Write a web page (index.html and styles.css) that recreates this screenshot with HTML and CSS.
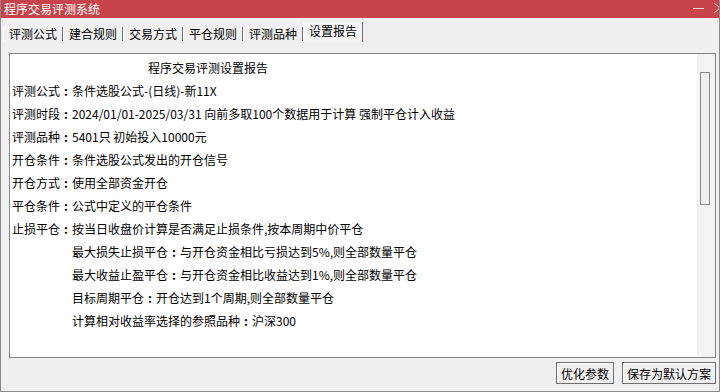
FILE: index.html
```html
<!DOCTYPE html>
<html lang="zh-CN">
<head>
  <meta charset="UTF-8" />
  <title>程序交易评测系统</title>
  <link rel="stylesheet" href="styles.css">
</head>
<body>
  <div class="window">
    <div class="titlebar">
      <span class="title">程序交易评测系统</span>
      <span class="win-btns">
        <svg class="ico-min" width="12" height="12" viewBox="0 0 12 12"><path d="M0 6.5h11" stroke="#f3d0d2" stroke-width="1"/></svg>
        <svg class="ico-close" width="6" height="12" viewBox="0 0 6 12"><path d="M0 2l6 5M0 12l6-5" stroke="#f3d0d2" stroke-width="1" fill="none"/></svg>
      </span>
    </div>

    <div class="tabs">
      <div class="tab">评测公式</div>
      <div class="tab">建合规则</div>
      <div class="tab">交易方式</div>
      <div class="tab">平仓规则</div>
      <div class="tab">评测品种</div>
      <div class="tab active">设置报告</div>
    </div>

    <div class="report">
      <div class="report-text">
        <div class="line heading">程序交易评测设置报告</div>
        <div class="line">评测公式<span class="colon">:</span>条件选股公式-(日线)-新11X</div>
        <div class="line">评测时段<span class="colon">:</span>2024/01/01-2025/03/31 向前多取100个数据用于计算 强制平仓计入收益</div>
        <div class="line">评测品种<span class="colon">:</span>5401只 初始投入10000元</div>
        <div class="line">开仓条件<span class="colon">:</span>条件选股公式发出的开仓信号</div>
        <div class="line">开仓方式<span class="colon">:</span>使用全部资金开仓</div>
        <div class="line">平仓条件<span class="colon">:</span>公式中定义的平仓条件</div>
        <div class="line">止损平仓<span class="colon">:</span>按当日收盘价计算是否满足止损条件,按本周期中价平仓</div>
        <div class="line sub">最大损失止损平仓<span class="colon">:</span>与开仓资金相比亏损达到5%,则全部数量平仓</div>
        <div class="line sub">最大收益止盈平仓<span class="colon">:</span>与开仓资金相比收益达到1%,则全部数量平仓</div>
        <div class="line sub">目标周期平仓<span class="colon">:</span>开仓达到1个周期,则全部数量平仓</div>
        <div class="line sub">计算相对收益率选择的参照品种<span class="colon">:</span>沪深300</div>
      </div>
      <div class="scrollbar">
        <div class="thumb"></div>
      </div>
    </div>

    <div class="footer">
      <button class="btn">优化参数</button>
      <button class="btn">保存为默认方案</button>
    </div>
  </div>
</body>
</html>
```

FILE: styles.css
```css
html, body {
  margin: 0;
  padding: 0;
  background: #f0f0f0;
  font-family: "Noto Sans CJK SC", "Microsoft YaHei", sans-serif;
  font-size: 12px;
  color: #000;
}

.window {
  width: 720px;
  height: 392px;
  box-sizing: border-box;
  border-left: 1px solid #8c8c8c;
  border-right: 1px solid #8c8c8c;
  border-bottom: 1px solid #8c8c8c;
  display: flex;
  flex-direction: column;
  overflow: hidden;
}

.titlebar {
  height: 18px;
  margin: 0 -1px;
  background: #c9434a;
  color: #fff;
  display: flex;
  align-items: center;
  justify-content: space-between;
  flex-shrink: 0;
}

.title {
  padding-left: 4px;
  line-height: 18px;
  margin-top: -1px;
}

.win-btns {
  display: flex;
  align-items: center;
  gap: 9px;
}

.ico-min {
  display: block;
  margin-top: -3px;
}

.ico-close {
  display: block;
  margin-top: -5px;
}

/* tab strip */
.tabs {
  display: flex;
  align-items: flex-end;
  height: 20px;
  padding: 4px 0 0 2px;
  flex-shrink: 0;
}

.tab {
  height: 14px;
  line-height: 14px;
  padding: 0 5px;
  margin-bottom: 1px;
  border-left: 1px solid #fff;
  border-right: 1px solid #6e6e6e;
}

.tab.active {
  height: 20px;
  line-height: 18px;
  margin-bottom: 0;
  background: #f5f5f5;
}

/* report box */
.report {
  margin: 11px 3px 0 8px;
  height: 305px;
  box-sizing: border-box;
  border: 1px solid #858585;
  background: #fff;
  display: flex;
  flex-shrink: 0;
}

.report-text {
  flex: 1;
  padding: 2px 0 0 2px;
}

.line {
  height: 23px;
  line-height: 23px;
  white-space: nowrap;
}

/* full-width colon, centred in its cell */
.colon {
  display: inline-block;
  width: 12px;
  text-align: center;
  font-weight: bold;
}

.heading {
  padding-left: 136px;
}

.sub {
  padding-left: 60px;
}

.scrollbar {
  width: 18px;
  background: #f3f3f3;
}

.thumb {
  margin: 18px 0 0 3px;
  width: 10px;
  height: 133px;
  box-sizing: border-box;
  border: 1px solid #8a8a8a;
  background: #f0f0f0;
}

/* bottom buttons */
.footer {
  display: flex;
  justify-content: flex-end;
  gap: 8px;
  padding: 4px 3px 0 0;
}

.btn {
  height: 22px;
  padding: 0 4px;
  font-family: inherit;
  font-size: 12px;
  color: #000;
  background: #f0f0f0;
  border: 1px solid #6f6f6f;
  box-shadow: inset 1px 1px #fff;
  border-radius: 0;
}
```
